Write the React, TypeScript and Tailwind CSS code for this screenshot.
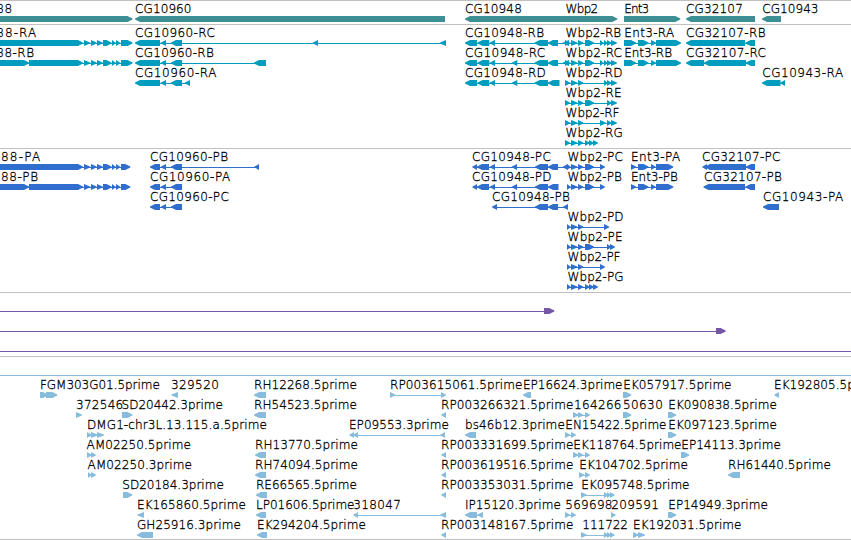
type Span = [number, number];

type Feature = {
  label?: string;
  // left and right edge of the label
  at?: Span;
  dir: "left" | "right";
  exons: Span[];
};

type Track = {
  name: string;
  className: string;
  rows: Feature[][];
};

const right = (label: string, from: number, to: number, ...exons: Span[]): Feature => ({
  label,
  at: [from, to],
  dir: "right",
  exons,
});

const left = (label: string, from: number, to: number, ...exons: Span[]): Feature => ({
  label,
  at: [from, to],
  dir: "left",
  exons,
});

// exon groups shared by several isoforms
const TAIL_88: Span[] = [[84, 90.5], [91, 97], [97, 103], [103, 111.5], [112, 116], [116, 120.5]];
const CG10960: Span[] = [[160.5, 166], [171, 182]];
const CG10948: Span[] = [[465, 477], [477.5, 489.3], [489.3, 495]];
const WBP2: Span[] = [[565, 570.5], [571, 577.7], [578, 583.7]];
const WBP2_P: Span[] = [[567, 571], [571, 577.7], [578, 583.7]];
const WBP2_END: Span[] = [[600, 604], [604, 608], [607, 612], [611, 617.3]];
const ENT3: Span[] = [[624, 636], [638, 648.5], [651, 656.5], [656, 681]];
const ENT3_P: Span[] = [[631, 636.5], [638, 648.5], [651, 656], [656, 673.3]];
const EST_END: Span[] = [[581, 587], [604, 608.5], [607, 611.5], [610, 615]];

const TRACKS: Track[] = [
  {
    name: "genes",
    className: "h-6 text-[#3d8f94]",
    rows: [
      [
        right("88", -3, 11.7, [-10, 132.5]),
        left("CG10960", 135.7, 191, [135, 445]),
        left("CG10948", 465.7, 521.3, [465, 570]),
        right("Wbp2", 566.3, 597.7, [565, 617.3]),
        right("Ent3", 625, 648.7, [624, 680.3]),
        left("CG32107", 686.7, 742.3, [686, 755]),
        left("CG10943", 763, 818, [762, 781]),
      ],
    ],
  },
  {
    name: "transcripts",
    className: "h-[124px] text-[#009dbf]",
    rows: [
      [
        right("88-RA", -3, 35.7, [-10, 83], ...TAIL_88, [121, 132.5]),
        left("CG10960-RC", 135.7, 214.3, [135, 160], ...CG10960, [312.5, 318], [439.7, 446]),
        left("CG10948-RB", 465.7, 543.5, ...CG10948, [534.7, 548], [548, 558], [562.5, 569]),
        right("Wbp2-RB", 566.3, 620.7, ...WBP2, [585, 594], ...WBP2_END),
        right("Ent3-RA", 625, 673.7, ...ENT3),
        left("CG32107-RB", 686.7, 765, [686, 745], [745.5, 755]),
      ],
      [
        right("88-RB", -3, 33.5, [-10, 29], [29, 83], ...TAIL_88, [121, 132.5]),
        left("CG10960-RB", 135.7, 213.3, [135, 160], ...CG10960, [254, 266]),
        left("CG10948-RC", 465.7, 544.7, ...CG10948, [511.5, 517.3], [534.7, 548], [548, 558], [562.5, 569]),
        right("Wbp2-RC", 566.3, 621.5, ...WBP2, [585, 594], ...WBP2_END),
        right("Ent3-RB", 625, 671.5, ...ENT3),
        left("CG32107-RC", 686.7, 765.5, [686, 704], [704, 746], [746, 755]),
      ],
      [
        left("CG10960-RA", 135.7, 216, [135, 160], ...CG10960, [184.5, 190]),
        left("CG10948-RD", 465.7, 545.3, ...CG10948, [511.5, 517.3], [534.7, 548], [548, 559.5]),
        right("Wbp2-RD", 566.3, 622, ...WBP2, [604, 608], [607, 612], [611, 617.3]),
        left("CG10943-RA", 763, 842.7, [762, 780.5], [780, 785]),
      ],
      [right("Wbp2-RE", 566.3, 621, ...WBP2, [585, 594], [607, 612], [611, 617.3])],
      [right("Wbp2-RF", 566.3, 619, ...WBP2, [600, 606], [607, 612], [611, 617.3])],
      [right("Wbp2-RG", 566.3, 622.3, ...WBP2, [585, 590], [589, 594], [593, 598.3])],
    ],
  },
  {
    name: "proteins",
    className: "h-36 text-[#306ecd]",
    rows: [
      [
        right("88-PA", 1.7, 39.7, [-10, 83], ...TAIL_88, [121, 130.3]),
        left("CG10960-PB", 150.7, 227.5, [150, 160], ...CG10960, [254, 259]),
        left("CG10948-PC", 472.7, 550.3, [472, 477], [477, 489], [489.5, 495], [511.5, 517], [535, 548], [548, 558], [562.5, 568]),
        right("Wbp2-PC", 568.3, 622.3, ...WBP2_P, [585, 594], [600, 605.3]),
        right("Ent3-PA", 631.7, 679.7, ...ENT3_P),
        left("CG32107-PC", 702.7, 780, [702, 707], [705, 746], [746, 755]),
      ],
      [
        right("88-PB", 1.7, 37.5, [-10, 29], [29, 83], ...TAIL_88, [121, 130.3]),
        left("CG10960-PA", 150.7, 229.7, [150, 160], ...CG10960),
        left("CG10948-PD", 472.7, 551, [472, 477], [477, 489], [489.5, 495], [511.5, 517], [535, 548], [548, 558.5]),
        right("Wbp2-PB", 568.3, 621.3, ...WBP2_P, [585, 594], [600, 605.3]),
        right("Ent3-PB", 631.7, 677.3, ...ENT3_P),
        left("CG32107-PB", 704.7, 781.3, [703.5, 745], [745.5, 755]),
      ],
      [
        left("CG10960-PC", 150.7, 228.3, [150, 160], ...CG10960),
        left("CG10948-PB", 492.7, 569.3, [491.7, 497], [535, 548], [548, 558], [562.7, 568]),
        left("CG10943-PA", 763.7, 842.7, [763, 779]),
      ],
      [right("Wbp2-PD", 568.3, 623, ...WBP2_P, [604, 609.5])],
      [right("Wbp2-PE", 568.3, 622, ...WBP2_P, [585, 594], [607, 611.5], [610, 615.3])],
      [right("Wbp2-PF", 568.3, 620, ...WBP2_P, [600, 605.3])],
      [right("Wbp2-PG", 568.3, 623, ...WBP2_P, [585, 590], [589, 594], [593, 598.3])],
    ],
  },
  {
    name: "insertions",
    className: "h-16 text-[#7556a5]",
    rows: [
      [{ dir: "right", exons: [[-20, -10], [544, 554.3]] }],
      [{ dir: "right", exons: [[-20, -10], [716, 725.7]] }],
      [{ dir: "right", exons: [[-20, -10], [860, 870]] }],
    ],
  },
  {
    name: "ests",
    className: "h-[183px] text-[#88bcdc]",
    rows: [
      [{ dir: "right", exons: [[-20, -10], [860, 870]] }],
      [
        right("FGM303G01.5prime", 40.7, 159.3, [40, 48], [46, 57.3]),
        left("329520", 171.7, 218.3, [171, 178]),
        left("RH12268.5prime", 254.7, 356.3, [254, 266]),
        right("RP003615061.5prime", 390.7, 522, [390, 395.7], [441, 446.3]),
        left("EP16624.3prime", 523.7, 622, [523, 531]),
        right("EK057917.5prime", 624, 731, [623, 631.3]),
        left("EK192805.5prime", 774.7, 882, [774, 779]),
      ],
      [
        right("372546", 76.7, 122.7, [76, 82.3]),
        right("SD20442.3prime", 122.3, 222.3, [122, 132.5]),
        left("RH54523.5prime", 254.7, 356.3, [254, 266]),
        left("RP003266321.5prime", 441.7, 573, [441, 446]),
        right("164266", 574.7, 621, [573, 578.7], [578, 583.7], [585, 590.3]),
        right("50630", 623.7, 662.3, [623, 631.3]),
        right("EK090838.5prime", 669, 776.3, [668, 676.3]),
      ],
      [
        right("DMG1-chr3L.13.115.a.5prime", 87.7, 266.3, [87, 92], [91, 98], [97, 104.3]),
        left("EP09553.3prime", 349.7, 448.3, [349, 354], [353, 358], [440, 445]),
        left("bs46b12.3prime", 465.7, 564.3, [465, 476]),
        right("EN15422.5prime", 566, 666, [565, 570.5], [571, 576.3]),
        right("EK097123.5prime", 669, 776.3, [668, 676.3]),
      ],
      [
        right("AM02250.5prime", 87.3, 190.3, [87, 92], [91, 96.3]),
        left("RH13770.5prime", 255.7, 357.3, [255, 266]),
        left("RP003331699.5prime", 441.7, 573, [441, 446]),
        right("EK118764.5prime", 574, 681, [573, 578.7], [578, 583.7], [585, 590.3]),
        right("EP14113.3prime", 682, 780.3, [681, 689.3]),
      ],
      [
        right("AM02250.3prime", 88.3, 191.3, [88, 92], [91, 96.3]),
        left("RH74094.5prime", 255.7, 357.3, [255, 266]),
        left("RP003619516.5prime", 441.7, 573, [441, 446]),
        right("EK104702.5prime", 580, 687.3, [579, 584.5], [585, 590.3]),
        left("RH61440.5prime", 728.7, 830.3, [728, 740]),
      ],
      [
        right("SD20184.3prime", 123, 223.3, [123, 132.3]),
        left("RE66565.5prime", 256.7, 356.3, [256, 267]),
        left("RP003353031.5prime", 441.7, 573, [441, 446]),
        right("EK095748.5prime", 582, 689, ...EST_END),
      ],
      [
        left("EK165860.5prime", 137.7, 245.3, [137, 144]),
        left("LP01606.5prime", 256.7, 354, [256, 266]),
        left("318047", 354, 400.3, [353, 358], [440, 446]),
        left("IP15120.3prime", 465.7, 560.3, [465, 477], [477, 483]),
        right("569698", 566, 612, [565, 570.5], [571, 576.3]),
        right("209591", 612, 658.3, [611, 616]),
        right("EP14949.3prime", 669, 767.3, [668, 676.3]),
      ],
      [
        left("GH25916.3prime", 137.7, 240.3, [137, 153]),
        left("EK294204.5prime", 257.7, 365.3, [257, 267]),
        left("RP003148167.5prime", 441.7, 573, [441, 446]),
        right("111722", 583, 627.5, ...EST_END),
        right("EK192031.5prime", 633.7, 741, [633, 639], [638, 645.3]),
      ],
    ],
  },
];

// short exons are plain triangles, longer ones a bar with a rounded tip
function arrow([start, end]: Span, dir: Feature["dir"]) {
  const width = end - start;
  const [tail, head, step] = dir === "right" ? [start, end, -1] : [end, start, 1];
  if (width < 8) {
    return `${tail},15 ${head + step},17.3 ${head},18 ${head + step},18.7 ${tail},21`;
  }
  return [
    `${tail},15`,
    `${head + step * 5},15`,
    `${head + step * 2.5},16.3`,
    `${head},17.5`,
    `${head},18.5`,
    `${head + step * 2.5},19.7`,
    `${head + step * 5},21`,
    `${tail},21`,
  ].join(" ");
}

function FeatureGlyph({ label, at, dir, exons }: Feature) {
  const first = exons[0][0];
  const last = exons[exons.length - 1][1];

  return (
    <g>
      {exons.length > 1 && (
        <rect x={first + 2} y={18} width={last - first - 4} height={1} fill="currentColor" />
      )}
      {exons.map((exon) => (
        <polygon key={exon[0]} points={arrow(exon, dir)} fill="currentColor" />
      ))}
      {at && (
        <text
          x={at[0] - 0.7}
          y={12}
          textLength={at[1] - at[0] + 1.2}
          className="fill-black stroke-black [stroke-width:0.3px] font-['DejaVu_Sans_Light','DejaVu_Sans',sans-serif] font-extralight text-[12px]"
        >
          {label}
        </text>
      )}
    </g>
  );
}

export default function App() {
  return (
    <main className="flex h-[540px] w-[851px] flex-col overflow-hidden border-b border-[#c0c0c0] bg-white">
      {TRACKS.map((track) => (
        <section
          key={track.name}
          className={`flex shrink-0 flex-col border-t border-[#c0c0c0] ${track.className}`}
        >
          {track.rows.map((row, i) => (
            <svg key={i} className="block h-5 w-full shrink-0 overflow-visible">
              {row.map((feature, j) => (
                <FeatureGlyph key={j} {...feature} />
              ))}
            </svg>
          ))}
        </section>
      ))}
    </main>
  );
}
